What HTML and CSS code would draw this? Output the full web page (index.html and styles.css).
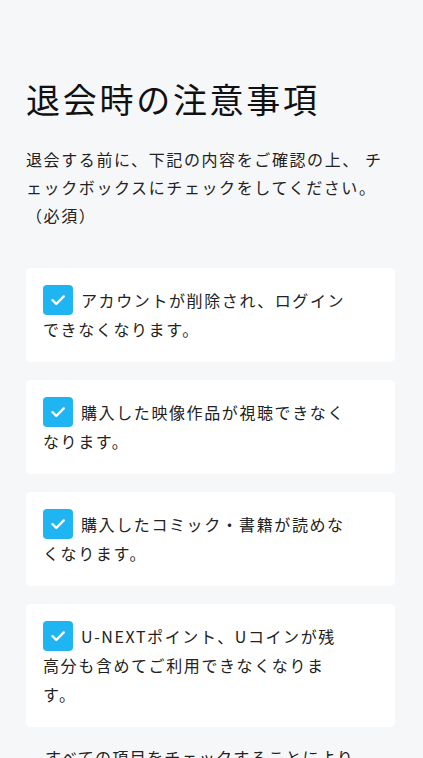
FILE: index.html
```html
<!DOCTYPE html>
<html lang="ja">
<head>
<meta charset="utf-8">
<title>退会時の注意事項</title>
<link rel="stylesheet" href="styles.css">
</head>
<body>
<main class="page">
  <h1 class="title">退会時の注意事項</h1>
  <p class="lead">退会する前に、下記の内容をご確認の上、 チェックボックスにチェックをしてください。<br>（必須）</p>
  <ul class="items">
    <li class="card"><label class="item"><span class="check"><svg viewBox="0 0 30 30" width="30" height="30"><path d="M9.5 15.2 L13.3 19 L20.8 11.4" fill="none" stroke="#fff" stroke-width="2.4" stroke-linecap="round" stroke-linejoin="round"/></svg></span>アカウントが削除され、ログインできなくなります。</label></li>
    <li class="card"><label class="item"><span class="check"><svg viewBox="0 0 30 30" width="30" height="30"><path d="M9.5 15.2 L13.3 19 L20.8 11.4" fill="none" stroke="#fff" stroke-width="2.4" stroke-linecap="round" stroke-linejoin="round"/></svg></span>購入した映像作品が視聴できなくなります。</label></li>
    <li class="card"><label class="item"><span class="check"><svg viewBox="0 0 30 30" width="30" height="30"><path d="M9.5 15.2 L13.3 19 L20.8 11.4" fill="none" stroke="#fff" stroke-width="2.4" stroke-linecap="round" stroke-linejoin="round"/></svg></span>購入したコミック・書籍が読めなくなります。</label></li>
    <li class="card"><label class="item"><span class="check"><svg viewBox="0 0 30 30" width="30" height="30"><path d="M9.5 15.2 L13.3 19 L20.8 11.4" fill="none" stroke="#fff" stroke-width="2.4" stroke-linecap="round" stroke-linejoin="round"/></svg></span>U-NEXTポイント、Uコインが残高分も含めてご利用できなくなります。</label></li>
  </ul>
  <p class="note">すべての項目をチェックすることにより退会手続きへ進めます。</p>
</main>
</body>
</html>
```
FILE: styles.css
```css
html, body {
  margin: 0;
  padding: 0;
  background: #f6f7f9;
}
body {
  font-family: "Noto Sans CJK JP", "Noto Sans", sans-serif;
  color: #222;
}
.page {
  padding: 73px 28px 40px 26px;
}
.title {
  margin: 0;
  font-size: 34px;
  font-weight: 400;
  line-height: 51px;
  letter-spacing: 0.08em;
  color: #111;
}
.lead {
  margin: 21px 0 0;
  font-size: 16px;
  line-height: 28px;
  letter-spacing: 0.1em;
}
.items {
  list-style: none;
  margin: 39px 0 0;
  padding: 0;
  display: flex;
  flex-direction: column;
  gap: 18px;
}
.card {
  background: #fff;
  border-radius: 5px;
  padding: 17px 45px 18px 17px;
}
.item {
  display: block;
  font-size: 16px;
  line-height: 29px;
  letter-spacing: 0.1em;
}
.check {
  display: inline-block;
  width: 30px;
  height: 30px;
  border-radius: 4px;
  background: #1fb5f2;
  vertical-align: -8px;
  margin-right: 8px;
}
.check svg {
  display: block;
}
.note {
  margin: 16px 0 0;
  padding: 0 30px 0 19px;
  font-size: 16px;
  line-height: 28px;
  letter-spacing: 0.08em;
}
```
